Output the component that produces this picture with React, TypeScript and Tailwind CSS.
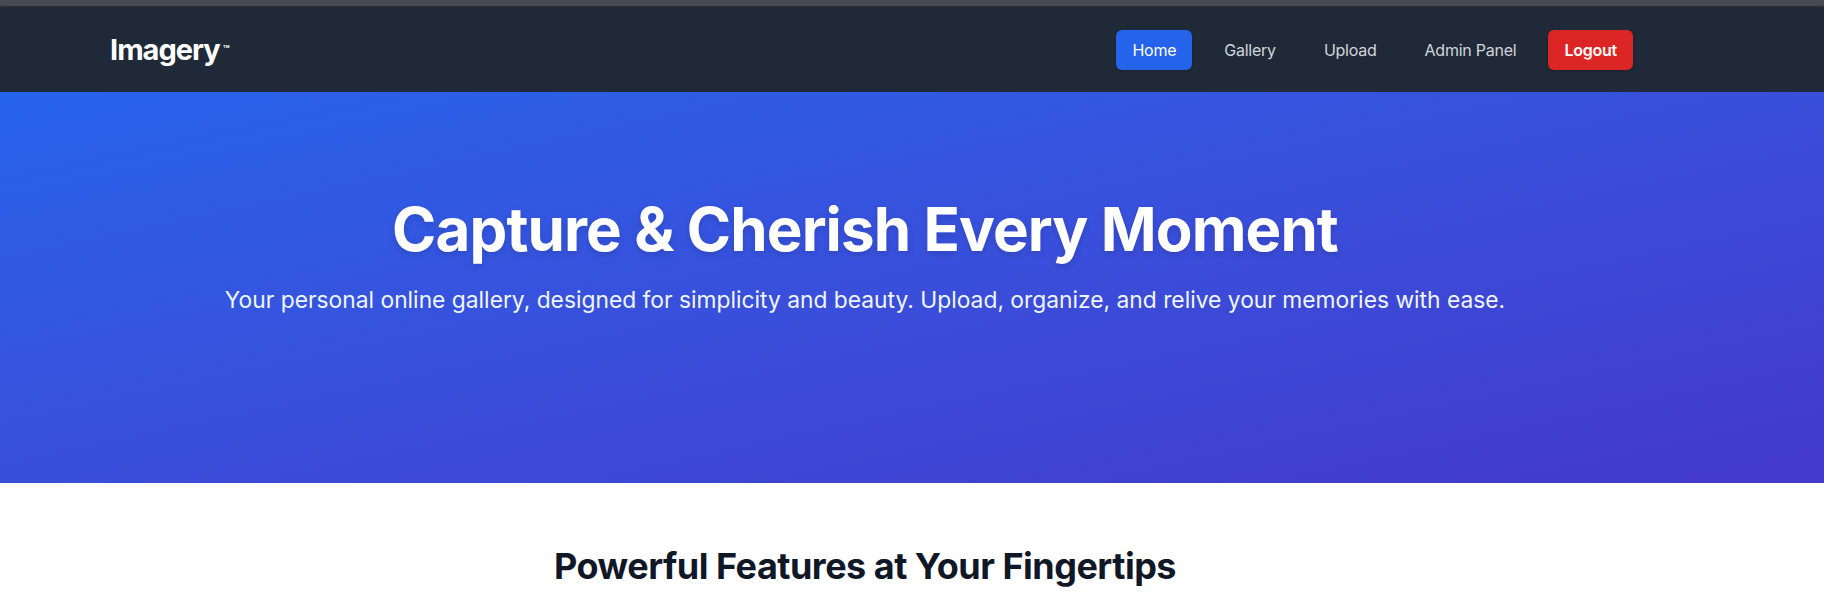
const links = ["Gallery", "Upload", "Admin Panel"];

export default function App() {
  return (
    <div className="min-h-screen bg-white font-['Inter',sans-serif]">
      {/* browser chrome strip */}
      <div className="h-[7px] bg-[#46494f] border-b border-[#2b2e34]" />

      <header className="bg-[#1f2937] shadow-md">
        <div className="flex h-[85px] items-center justify-between pl-[110px] pr-[191px]">
          <a className="flex items-start text-[29px] leading-9 font-bold tracking-[-0.035em] text-white">
            Imagery
            <span className="mt-[12px] ml-[3px] text-[11px] leading-none font-semibold tracking-normal">™</span>
          </a>
          <nav className="flex items-center gap-4 text-base tracking-[-0.015em]">
            <a className="rounded-md bg-[#2563eb] px-4 py-2 text-white shadow">Home</a>
            {links.map((l) => (
              <a key={l} className="rounded-md px-4 py-2 text-gray-300">
                {l}
              </a>
            ))}
            <a className="rounded-md bg-[#dc2626] px-4 py-2 font-semibold text-white shadow">Logout</a>
          </nav>
        </div>
      </header>

      <section className="h-[391px] bg-linear-to-br from-[#2563eb] to-[#4338ca]">
        <div className="w-[1730px] pt-[107px] text-center text-white">
          <h1 className="text-6xl font-bold tracking-[-0.015em] drop-shadow-md">Capture &amp; Cherish Every Moment</h1>
          <p className="mt-[27px] text-[22.8px] leading-7 text-blue-50">
            Your personal online gallery, designed for simplicity and beauty. Upload, organize, and relive your memories with ease.
          </p>
        </div>
      </section>

      <section className="pt-[63px]">
        <div className="w-[1730px] text-center">
          <h2 className="text-4xl font-bold tracking-[-0.014em] text-gray-900">Powerful Features at Your Fingertips</h2>
        </div>
      </section>
    </div>
  );
}
